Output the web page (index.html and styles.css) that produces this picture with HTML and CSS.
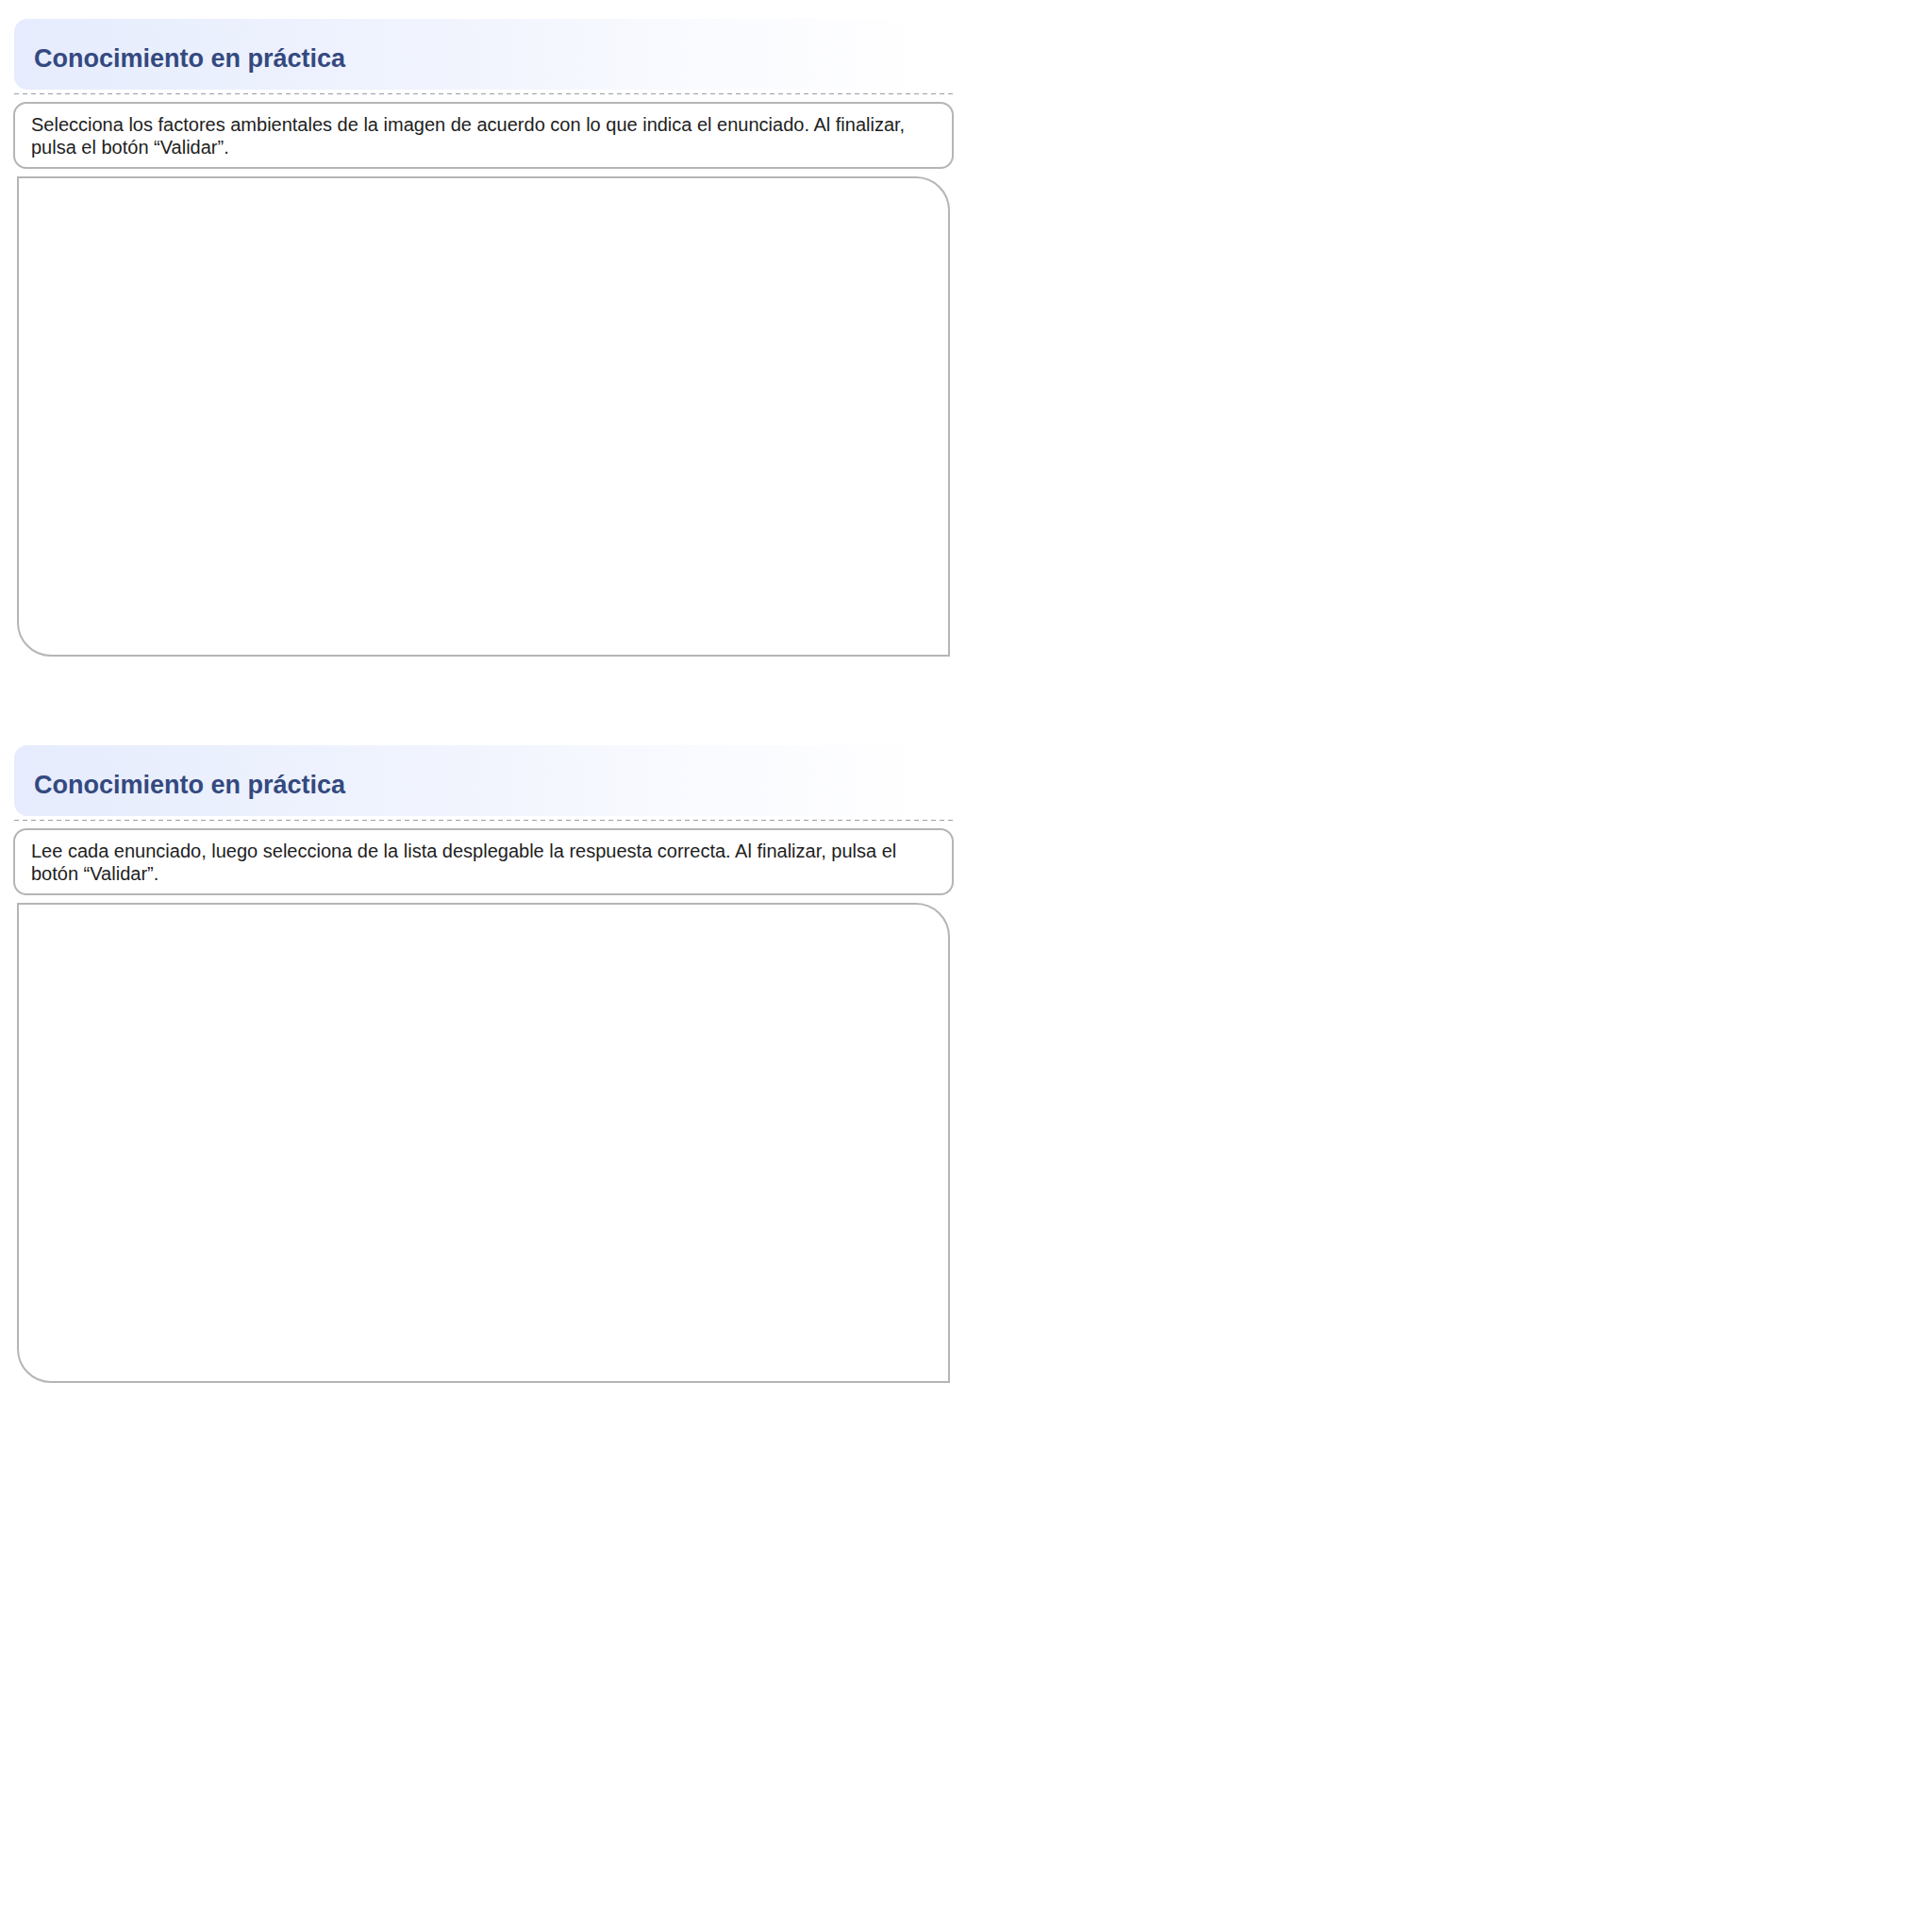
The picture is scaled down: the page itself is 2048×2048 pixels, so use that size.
FILE: index.html
```html
<!DOCTYPE html>
<html lang="es">
<head>
<meta charset="utf-8">
<title>Conocimiento en práctica</title>
<link rel="stylesheet" href="styles.css">
</head>
<body>
  <section class="activity">
    <div class="activity-head">
      <h2 class="activity-title">Conocimiento en práctica</h2>
    </div>
    <div class="divider"></div>
    <div class="instructions">Selecciona los factores ambientales de la imagen de acuerdo con lo que indica el enunciado. Al finalizar, pulsa el botón “Validar”.</div>
    <div class="frame"></div>
  </section>
  <section class="activity">
    <div class="activity-head">
      <h2 class="activity-title">Conocimiento en práctica</h2>
    </div>
    <div class="divider"></div>
    <div class="instructions">Lee cada enunciado, luego selecciona de la lista desplegable la respuesta correcta. Al finalizar, pulsa el botón “Validar”.</div>
    <div class="frame"></div>
  </section>
</body>
</html>
```
FILE: styles.css
```css
html, body {
  margin: 0;
  padding: 0;
  background: #ffffff;
}

body {
  padding: 20px 0 0 14px;
  font-family: "Liberation Sans", Arial, sans-serif;
}

.activity {
  width: 999px;
  display: flex;
  flex-direction: column;
  margin-bottom: 94px;
}

.activity-head {
  margin-left: 1px;
  height: 75px;
  border-radius: 14px;
  background: linear-gradient(to right, #e6ecfd 0%, #f2f5fe 50%, #fafbff 75%, #ffffff 98%);
  display: flex;
  align-items: center;
  padding: 9px 0 0 21px;
  box-sizing: border-box;
}

.activity-title {
  margin: 0;
  font-size: 27px;
  font-weight: bold;
  color: #34497f;
}

.divider {
  margin: 4px 0 0 1px;
  width: 998px;
  height: 1px;
  background: repeating-linear-gradient(to right, #9a9ea6 0 5px, transparent 5px 9px);
}

.instructions {
  margin-top: 8px;
  width: 997px;
  box-sizing: border-box;
  height: 71px;
  border: 2px solid #b5b5b5;
  border-radius: 14px;
  padding: 11px 17px 9px;
  font-size: 20px;
  line-height: 23.5px;
  color: #1e1e1e;
}

.frame {
  margin: 8px 0 0 4px;
  width: 989px;
  height: 509px;
  box-sizing: border-box;
  border: 2px solid #b5b5b5;
  border-radius: 0 36px 0 36px;
  background: #ffffff;
}
```
